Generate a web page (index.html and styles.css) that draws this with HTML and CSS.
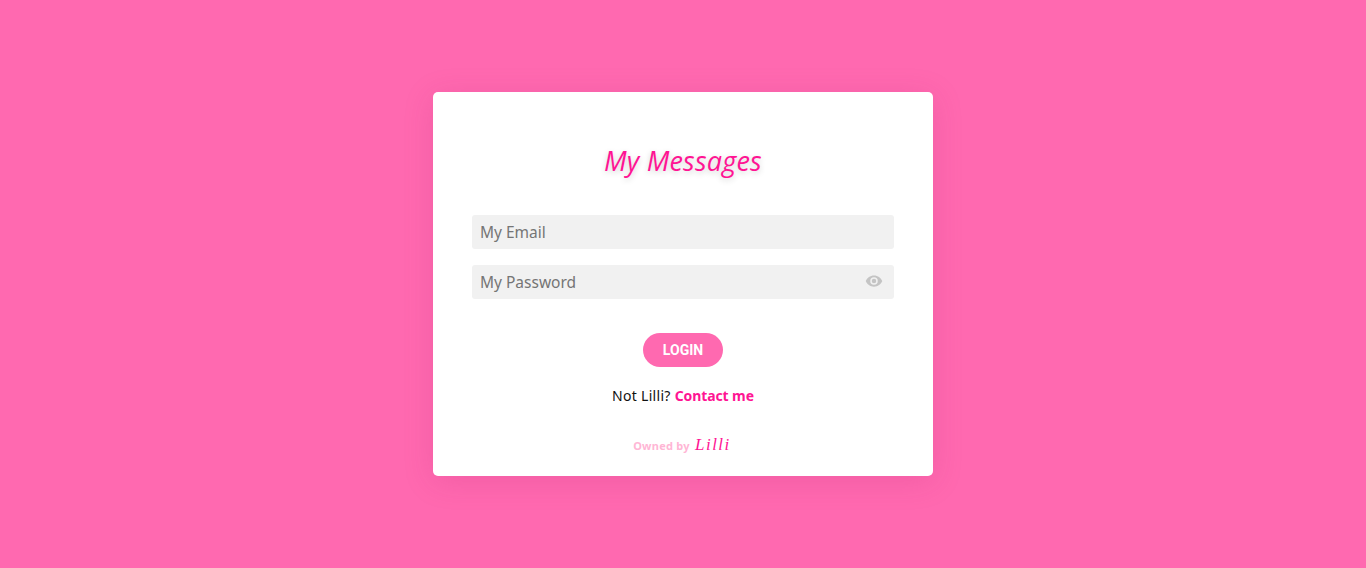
FILE: index.html
```html
<!DOCTYPE html>
<html lang="en">
  <head>
    <meta charset="UTF-8" />
    <meta name="viewport" content="width=device-width, initial-scale=1.0" />
    <title>My Messages</title>
    <link rel="stylesheet" href="styles.css">
  </head>
  <body>
    <div class="card">
      <h1 class="title">My Messages</h1>
      <form class="login-form" onsubmit="return false;">
        <input class="field" type="email" placeholder="My Email" />
        <div class="password-wrap">
          <input class="field" type="password" placeholder="My Password" />
          <svg class="eye" viewBox="0 0 24 24" aria-hidden="true">
            <path d="M12 4.5C7 4.5 2.7 7.6 1 12c1.7 4.4 6 7.5 11 7.5s9.3-3.1 11-7.5c-1.7-4.4-6-7.5-11-7.5zM12 17a5 5 0 1 1 0-10 5 5 0 0 1 0 10zm0-8a3 3 0 1 0 0 6 3 3 0 0 0 0-6z" />
          </svg>
        </div>
        <button class="login-btn" type="submit">LOGIN</button>
      </form>
      <p class="not-user">Not Lilli? <a href="#">Contact me</a></p>
      <p class="owned">Owned by <span class="signature">Lilli</span></p>
    </div>
  </body>
</html>
```

FILE: styles.css
```css
* {
  box-sizing: border-box;
}
body {
  margin: 0;
  height: 100vh;
  display: flex;
  align-items: center;
  justify-content: center;
  background: #ff69b0;
  font-family: "Noto Sans", sans-serif;
}
.card {
  width: 500px;
  height: 384px;
  padding: 50px 39px 0;
  background: #fff;
  border-radius: 5px;
  box-shadow: 0 5px 30px rgba(180, 40, 110, 0.18);
  text-align: center;
}
.title {
  margin: 0 0 35px;
  height: 38px;
  font-family: "Open Sans", sans-serif;
  font-size: 27px;
  line-height: 38px;
  font-weight: 500;
  font-style: italic;
  letter-spacing: 0.2px;
  color: #ff1493;
  text-shadow: 0 2px 6px rgba(0, 0, 0, 0.2);
}
.field {
  display: block;
  width: 100%;
  height: 34px;
  padding: 0 8px;
  border: none;
  border-radius: 3px;
  background: #f1f1f1;
  font-family: "Noto Sans", sans-serif;
  font-size: 15.5px;
  color: #333;
}
.field::placeholder {
  color: #757575;
  opacity: 1;
}
.password-wrap {
  position: relative;
  margin-top: 16px;
}
.eye {
  position: absolute;
  top: 7px;
  right: 11px;
  width: 18px;
  height: 18px;
  fill: #c4c4c4;
}
.login-btn {
  display: block;
  width: 80px;
  height: 34px;
  margin: 34px auto 0;
  border: none;
  border-radius: 17px;
  background: #ff69b0;
  color: #fff;
  font-family: Roboto, sans-serif;
  font-size: 14px;
  font-weight: bold;
  cursor: pointer;
}
.not-user {
  margin: 19px 0 0;
  font-size: 14px;
  line-height: 20px;
  letter-spacing: 0.3px;
  color: #111;
}
.not-user a {
  color: #ff1493;
  font-weight: bold;
  letter-spacing: -0.1px;
  text-decoration: none;
}
.owned {
  margin: 28px 0 0;
  padding-right: 2px;
  font-size: 11px;
  line-height: 22px;
  font-weight: bold;
  letter-spacing: 0.25px;
  color: #ffb6d5;
}
.signature {
  margin-left: 2px;
  font-family: "Liberation Serif", serif;
  font-size: 17px;
  font-weight: normal;
  font-style: italic;
  letter-spacing: 1.5px;
  color: #ff1493;
}
```
